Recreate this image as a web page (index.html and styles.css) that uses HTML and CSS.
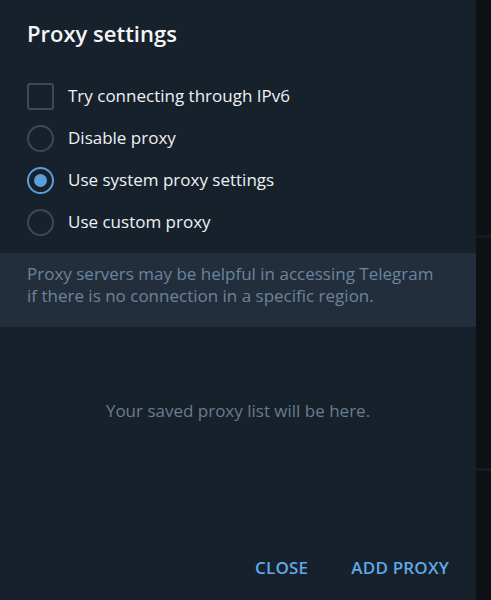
FILE: index.html
```html
<!DOCTYPE html>
<html lang="en">
<head>
<meta charset="utf-8">
<title>Proxy settings</title>
<link rel="stylesheet" href="styles.css">
</head>
<body>
<div class="screen">
  <div class="dialog">
    <h1 class="title">Proxy settings</h1>
    <div class="options">
      <div class="row"><span class="check"></span><span class="label">Try connecting through IPv6</span></div>
      <div class="row"><span class="radio"></span><span class="label">Disable proxy</span></div>
      <div class="row"><span class="radio on"></span><span class="label">Use system proxy settings</span></div>
      <div class="row"><span class="radio"></span><span class="label">Use custom proxy</span></div>
    </div>
    <div class="info">Proxy servers may be helpful in accessing Telegram<br>if there is no connection in a specific region.</div>
    <div class="empty">Your saved proxy list will be here.</div>
    <div class="footer">
      <span class="btn">CLOSE</span>
      <span class="btn">ADD PROXY</span>
    </div>
  </div>
  <div class="side">
    <div class="side-line l1"></div>
    <div class="side-line l2"></div>
  </div>
</div>
</body>
</html>
```
FILE: styles.css
```css
html, body {
  margin: 0;
  padding: 0;
  background: #0e1216;
}
.screen {
  display: flex;
  width: 491px;
  height: 600px;
  overflow: hidden;
  font-family: "Open Sans", "Noto Sans", sans-serif;
}
.dialog {
  width: 476px;
  height: 600px;
  background: #17212b;
  display: flex;
  flex-direction: column;
}
.title {
  margin: 19px 0 0 27px;
  font-size: 22px;
  line-height: 29px;
  font-weight: 600;
  color: #f3f5f7;
}
.options {
  margin-top: 27px;
  display: flex;
  flex-direction: column;
}
.row {
  height: 42px;
  display: flex;
  align-items: center;
  padding-left: 27px;
}
.label {
  margin-left: 14px;
  font-size: 17px;
  line-height: 22px;
  color: #eef1f4;
}
.check {
  width: 23px;
  height: 23px;
  border: 2px solid #3d4957;
  border-radius: 3px;
  flex: none;
}
.radio {
  width: 23px;
  height: 23px;
  border: 2px solid #3d4957;
  border-radius: 50%;
  flex: none;
  position: relative;
}
.radio.on {
  border-color: #5a9fdc;
}
.radio.on::after {
  content: "";
  position: absolute;
  left: 5px;
  top: 5px;
  width: 13px;
  height: 13px;
  border-radius: 50%;
  background: #5a9fdc;
}
.info {
  margin-top: 10px;
  background: #232e3c;
  padding: 10px 27px 20px;
  font-size: 17px;
  line-height: 22px;
  color: #6b849d;
}
.empty {
  margin-top: 73px;
  text-align: center;
  font-size: 17px;
  line-height: 22px;
  color: #6a7c8e;
}
.footer {
  margin-top: 136px;
  display: flex;
  justify-content: flex-end;
  gap: 43px;
  padding-right: 27px;
}
.btn {
  font-size: 17px;
  line-height: 20px;
  font-weight: 600;
  letter-spacing: 0.2px;
  color: #5fa8e9;
}
.side {
  flex: 1;
  height: 600px;
  background: #0d1115;
  position: relative;
}
.side-line {
  position: absolute;
  left: 0;
  right: 0;
  height: 3px;
  background: #151b21;
}
.l1 { top: 235px; }
.l2 { top: 468px; }
```
